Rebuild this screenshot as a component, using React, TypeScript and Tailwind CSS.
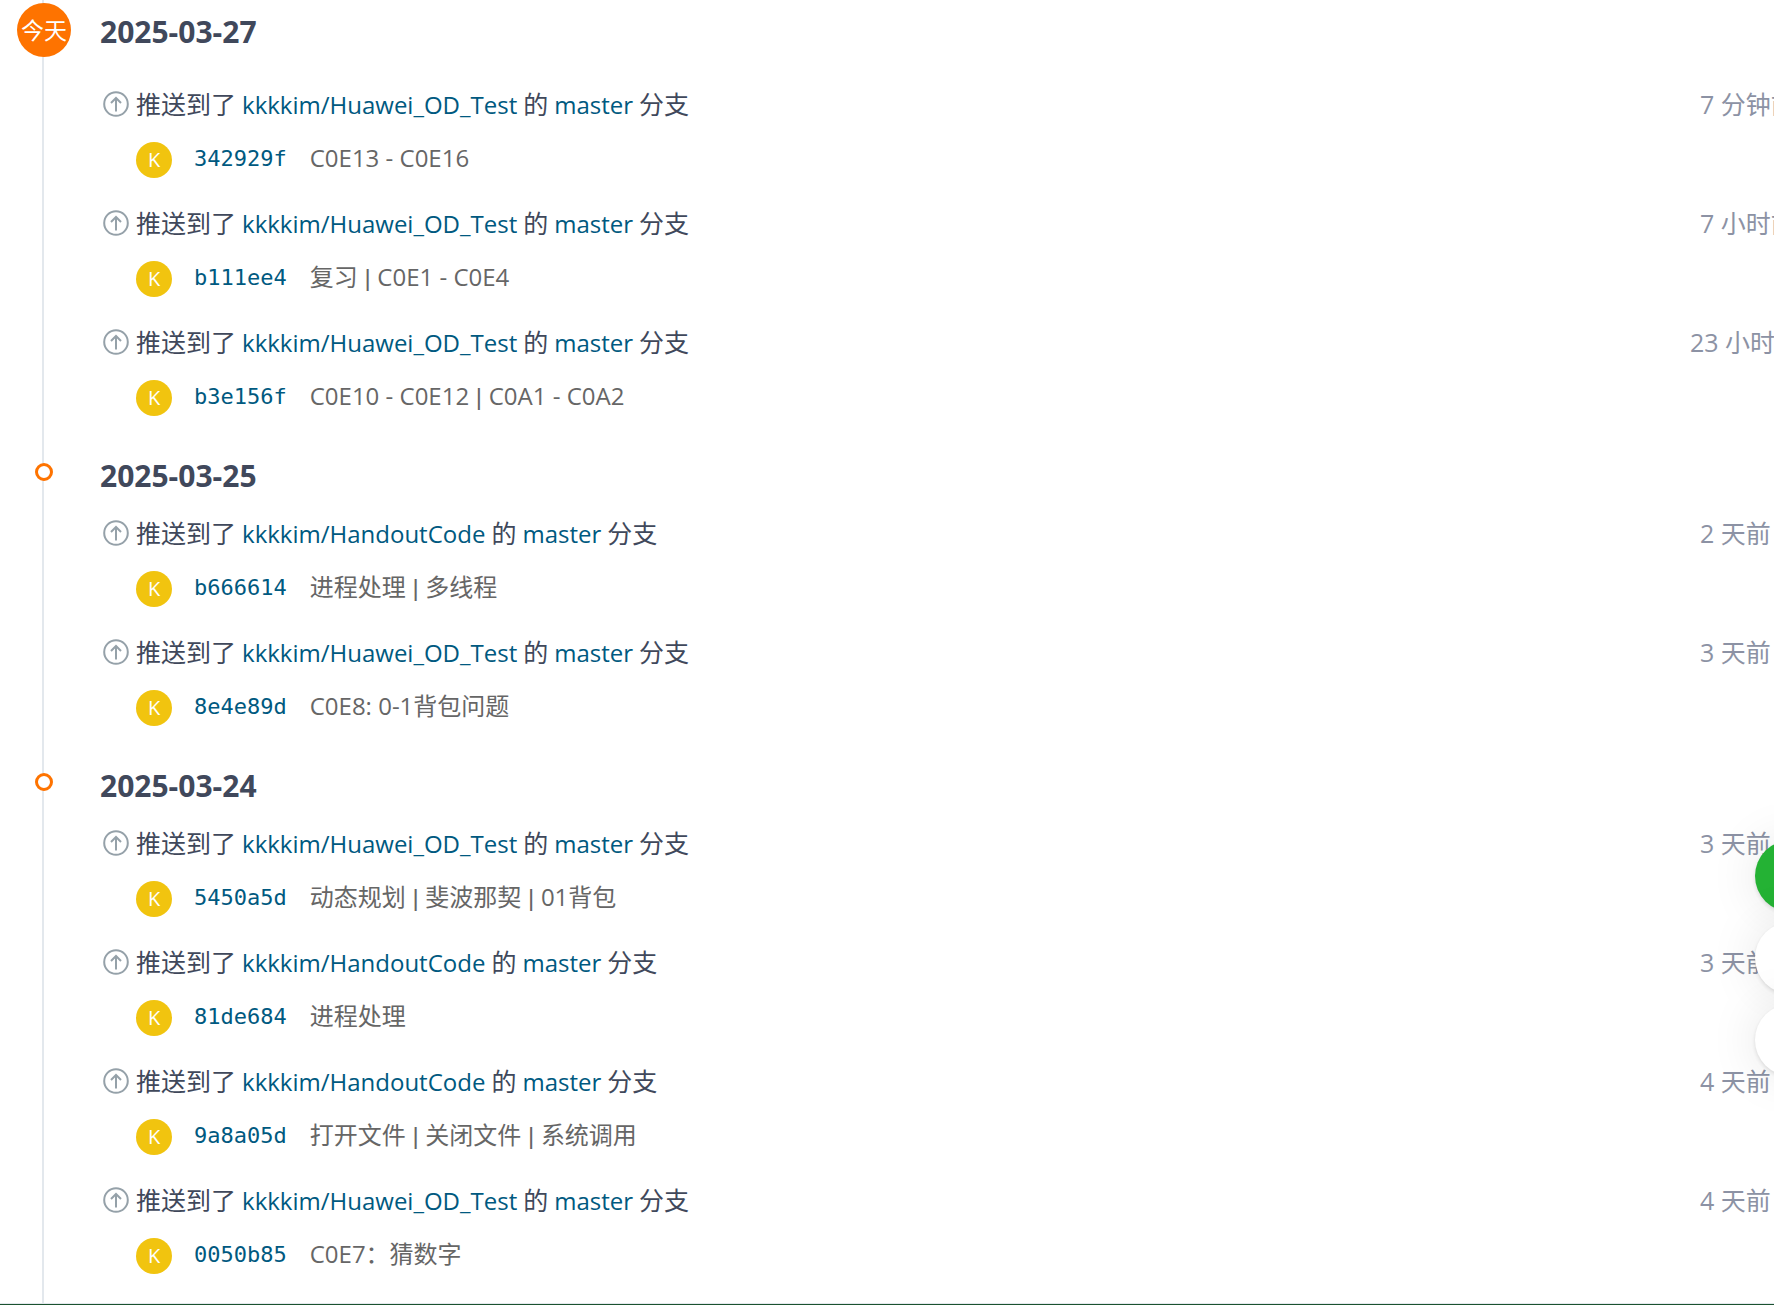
import React from 'react';

type PushEvent = {
  repo: string;
  sha: string;
  message: string;
  time: string;
};

type Day = {
  date: string;
  today?: boolean;
  events: PushEvent[];
};

const OD = 'kkkkim/Huawei_OD_Test';
const HANDOUT = 'kkkkim/HandoutCode';

const DAYS: Day[] = [
  {
    date: '2025-03-27',
    today: true,
    events: [
      { repo: OD, sha: '342929f', message: 'C0E13 - C0E16', time: '7 分钟前' },
      { repo: OD, sha: 'b111ee4', message: '复习 | C0E1 - C0E4', time: '7 小时前' },
      { repo: OD, sha: 'b3e156f', message: 'C0E10 - C0E12 | C0A1 - C0A2', time: '23 小时前' },
    ],
  },
  {
    date: '2025-03-25',
    events: [
      { repo: HANDOUT, sha: 'b666614', message: '进程处理 | 多线程', time: '2 天前' },
      { repo: OD, sha: '8e4e89d', message: 'C0E8: 0-1背包问题', time: '3 天前' },
    ],
  },
  {
    date: '2025-03-24',
    events: [
      { repo: OD, sha: '5450a5d', message: '动态规划 | 斐波那契 | 01背包', time: '3 天前' },
      { repo: HANDOUT, sha: '81de684', message: '进程处理', time: '3 天前' },
      { repo: HANDOUT, sha: '9a8a05d', message: '打开文件 | 关闭文件 | 系统调用', time: '4 天前' },
      { repo: OD, sha: '0050b85', message: 'C0E7：猜数字', time: '4 天前' },
    ],
  },
];

function PushIcon() {
  return (
    <svg className="h-[26px] w-[26px] shrink-0" viewBox="0 0 26 26" fill="none" stroke="#95a1a9" strokeWidth="2" aria-hidden="true">
      <circle cx="13" cy="13" r="11.8" />
      <path d="M13 20.5V7M8 12l5-5 5 5" />
    </svg>
  );
}

// The bar is set in a narrower face than the rest of the message
function CommitMessage({ text }: { text: string }) {
  return (
    <span className="ml-[23px] whitespace-pre text-[24px] leading-[34px] text-[#666]">
      {text.split(' | ').map((part, i) => (
        <React.Fragment key={part}>
          {i > 0 ? <span className="font-['Liberation_Sans',sans-serif]">{' | '}</span> : null}
          {part}
        </React.Fragment>
      ))}
    </span>
  );
}

function EventRow({ event }: { event: PushEvent }) {
  return (
    <li className="h-[119px]">
      <div className="flex h-[50px] items-center">
        <PushIcon />
        <div className="ml-[7px] flex grow items-baseline gap-[6px] whitespace-nowrap text-[25px] leading-[34px]">
          <span>推送到了</span>
          <a href={`#${event.repo}`} className="text-[24px] text-[#005980]">{event.repo}</a>
          <span>的</span>
          <a href={`#${event.repo}/master`} className="text-[24px] text-[#005980]">master</a>
          <span>分支</span>
        </div>
        <time className="min-w-[100px] shrink-0 whitespace-nowrap text-[25px] leading-[34px] text-[#8c92a4]">{event.time}</time>
      </div>
      <div className="ml-[33px] flex h-[58px] items-center whitespace-nowrap">
        <span className="mt-1 flex h-9 w-9 items-center justify-center rounded-full bg-[#f1c40f] text-[20px] text-white">K</span>
        <a href={`#${event.sha}`} className="ml-[22px] font-['DejaVu_Sans_Mono','Liberation_Mono',monospace] text-[22px] text-[#005980]">
          {event.sha}
        </a>
        <CommitMessage text={event.message} />
      </div>
    </li>
  );
}

function DaySection({ day }: { day: Day }) {
  return (
    <section className="flex last:grow">
      <div className="relative ml-[17px] flex w-[52px] shrink-0 justify-center">
        <div className="h-full w-[2px] bg-[#e3e8ed]" />
        {day.today ? (
          <span className="absolute left-0 top-[3px] flex h-[54px] w-[54px] items-center justify-center whitespace-nowrap rounded-full bg-[#fe7300] text-[23px] text-white">
            今天
          </span>
        ) : (
          <span className="absolute left-[18px] top-[19px] h-[18px] w-[18px] rounded-full border-[3px] border-[#fe7300] bg-white" />
        )}
      </div>
      <div className="-mr-[26px] ml-[31px] grow pb-[8px]">
        <h2 className={`pt-[12px] text-[30px] font-bold leading-[40px] ${day.today ? 'h-[79px]' : 'h-[64px]'}`}>{day.date}</h2>
        <ul className="ml-[3px]">
          {day.events.map((event) => (
            <EventRow key={event.sha} event={event} />
          ))}
        </ul>
      </div>
    </section>
  );
}

export default function App() {
  return (
    <div className="flex min-h-screen flex-col overflow-x-hidden border-b border-[#1b5230] bg-white font-['Open_Sans','Noto_Sans_CJK_SC',sans-serif] text-[#40485b]">
      <main className="flex grow flex-col border-b border-[#e3e8ed]">
        {DAYS.map((day) => (
          <DaySection key={day.date} day={day} />
        ))}
      </main>

      <div className="fixed -right-[53px] top-[840px] flex flex-col gap-[10px]">
        <button aria-label="feedback" className="h-[72px] w-[72px] rounded-full bg-[#24b234] shadow-[0_2px_4px_rgba(0,0,0,0.12),0_0_50px_rgba(0,0,0,0.1)]" />
        <button aria-label="help" className="h-[72px] w-[72px] rounded-full bg-white shadow-[0_2px_4px_rgba(0,0,0,0.12),0_0_50px_rgba(0,0,0,0.1)]" />
        <button aria-label="top" className="h-[72px] w-[72px] rounded-full bg-white shadow-[0_2px_4px_rgba(0,0,0,0.12),0_0_50px_rgba(0,0,0,0.1)]" />
      </div>
    </div>
  );
}
